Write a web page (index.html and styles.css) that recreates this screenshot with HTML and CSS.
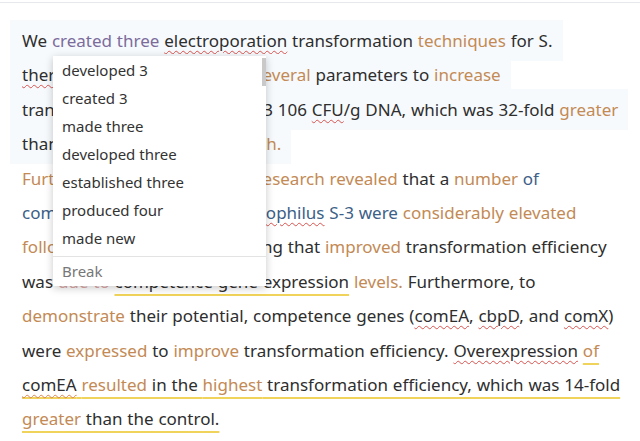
FILE: index.html
```html
<!DOCTYPE html>
<html>
<head>
<meta charset="utf-8">
<link rel="stylesheet" href="styles.css">
</head>
<body>
<div class="page">
  <p class="text"><span class="hl">We <span class="pu">created three</span> <span class="sp">electroporation</span> transformation <span class="or">techniques</span> for S.<br><span class="sp">thermophilus</span> and optimized <span class="or">several</span> parameters to <span class="or">increase</span><br>transformation efficiency to 1.3 106 <span class="sp">CFU</span>/g DNA, which was 32-fold <span class="or">greater</span><br>than <span class="or">that of the initial approach.</span></span><br><span class="or">Further transcriptomic study research revealed</span> that a <span class="or">number</span> <span class="bl">of</span><br><span class="bl">competence genes in S. <span class="sp">thermophilus</span> S-3 were</span> <span class="or">considerably elevated</span><br><span class="or">following</span> transformation, noting that <span class="or">improved</span> transformation efficiency<br>was <span class="rd">due to</span> <span class="yl">competence gene expression</span> <span class="or">levels.</span> Furthermore, to<br><span class="or">demonstrate</span> their potential, competence genes (<span class="sp">comEA</span>, <span class="sp">cbpD</span>, and <span class="sp">comX</span>)<br>were <span class="or">expressed</span> to <span class="or">improve</span> transformation efficiency. <span class="sp">Overexpression</span> <span class="or yl">of</span><br><span class="yl"><span class="sp2">comEA</span> <span class="or">resulted</span> in the <span class="or">highest</span> transformation efficiency, which was 14-fold</span><br><span class="yl"><span class="or">greater</span> than the control.</span></p>

  <div class="menu">
    <div class="scroll"></div>
    <ul class="items">
      <li>developed 3</li>
      <li>created 3</li>
      <li>made three</li>
      <li>developed three</li>
      <li>established three</li>
      <li>produced four</li>
      <li>made new</li>
    </ul>
    <div class="break">Break</div>
  </div>
</div>
</body>
</html>
```

FILE: styles.css
```css
html, body {
  margin: 0;
  padding: 0;
  background: #ffffff;
}
body {
  width: 640px;
  height: 441px;
  overflow: hidden;
}
.page {
  position: relative;
  height: 441px;
  border-top: 1px solid #e6e8ec;
  margin-top: 2px;
  box-sizing: border-box;
  padding: 21px 0 0 22px;
  font-family: "Noto Sans", "Open Sans", sans-serif;
}
.text {
  margin: 0;
  font-size: 17px;
  line-height: 34.4px;
  color: #2e2e2e;
  white-space: nowrap;
  word-spacing: 0.4px;
}
.hl {
  background: #f7fafd;
  padding: 9px 10px 9px 12px;
  margin-left: -12px;
  -webkit-box-decoration-break: clone;
  box-decoration-break: clone;
}
.pu { color: #7b6c9c; }
.or { color: #c38a55; }
.bl { color: #3c6087; }
.rd { color: #e0a8a8; text-decoration: line-through; }
.sp {
  text-decoration: underline wavy #d9534f;
  text-decoration-thickness: 1px;
  text-underline-offset: 3px;
}
.sp2 {
  text-decoration: underline wavy #d9834f;
  text-decoration-thickness: 1px;
  text-underline-offset: 3px;
}
.yl {
  text-decoration: underline solid #f0d35a;
  text-decoration-thickness: 2px;
  text-underline-offset: 6px;
}
.menu {
  position: absolute;
  left: 53px;
  top: 53px;
  width: 213px;
  background: #ffffff;
  box-shadow: 0 2px 8px rgba(0, 0, 0, 0.22);
  font-size: 15px;
  color: #333333;
}
.scroll {
  position: absolute;
  right: 0;
  top: 2px;
  width: 4px;
  height: 28px;
  background: #c9c9c9;
}
.items {
  list-style: none;
  margin: 0;
  padding: 0 0 4px 0;
  border-bottom: 1px solid #e3e3e3;
}
.items li {
  height: 28px;
  line-height: 28px;
  padding-left: 9px;
}
.break {
  height: 29px;
  line-height: 28px;
  padding-left: 9px;
  color: #777777;
}
```
